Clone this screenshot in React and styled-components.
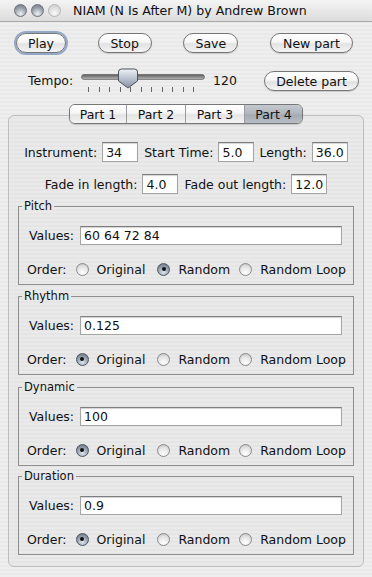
import React from 'react'
import styled, { createGlobalStyle } from 'styled-components'

const GlobalStyle = createGlobalStyle`
  html, body { margin: 0; padding: 0; }
  body {
    font-family: "DejaVu Sans", "Liberation Sans", sans-serif;
    background: #ececec;
    color: #111;
  }
`

const FONT = `"DejaVu Sans", "Liberation Sans", sans-serif`

const Window = styled.div`
  width: 372px;
  height: 577px;
  overflow: hidden;
  display: flex;
  flex-direction: column;
  background: repeating-linear-gradient(0deg, #eeeeee 0 2px, #e9e9e9 2px 4px);
`

const TitleBar = styled.div`
  height: 22px;
  box-sizing: border-box;
  display: flex;
  align-items: center;
  gap: 4px;
  padding-left: 14px;
  background: linear-gradient(#f4f4f4, #dcdcdc);
  border-bottom: 1px solid #a9a9a9;
`

const Light = styled.span`
  width: 13px;
  height: 13px;
  border-radius: 50%;
  box-sizing: border-box;
  border: 1px solid ${p => (p.$dim ? '#b4b4b4' : '#6d727a')};
  background: ${p =>
    p.$dim
      ? 'radial-gradient(circle at 50% 75%, #fafafa, #d6d6d6 70%)'
      : 'radial-gradient(circle at 50% 80%, #eef1f5, #9ca3ad 55%, #6d747e)'};
`

const Title = styled.span`
  margin-left: 8px;
  font: 12.6px ${FONT};
  color: #111;
  white-space: nowrap;
`

const ButtonRow = styled.div`
  display: flex;
  justify-content: space-between;
  padding: 0 19px 0 16px;
  margin-top: 11px;
`

const Button = styled.button`
  height: 20px;
  width: ${p => p.$w}px;
  padding: 0;
  border-radius: 10px;
  border: 1px solid #767676;
  background: linear-gradient(#ffffff 0%, #f6f6f6 45%, #e2e2e2 55%, #f4f4f4 100%);
  font: 12.5px ${FONT};
  color: #111;
  box-shadow: ${p =>
    p.$focus ? '0 0 0 2px rgba(118, 146, 186, 0.75)' : '0 1px 1px rgba(0, 0, 0, 0.15)'};
`

const TempoRow = styled.div`
  display: flex;
  align-items: flex-start;
  margin-top: 18px;
  padding-left: 28px;
  height: 20px;
`

const TempoLabel = styled.span`
  font: 12.5px ${FONT};
  line-height: 20px;
  width: 53px;
`

const SliderSvg = styled.svg`
  margin-top: -4px;
  flex: none;
`

const TempoValue = styled.span`
  font: 12.5px ${FONT};
  line-height: 20px;
  margin-left: 8px;
  width: 51px;
`

const TabBar = styled.div`
  display: flex;
  align-self: center;
  margin-top: 13px;
  margin-bottom: -9px;
  position: relative;
  z-index: 1;
  border: 1px solid #777;
  border-radius: 6px;
  overflow: hidden;
  box-shadow: 0 1px 1px rgba(0, 0, 0, 0.15);
`

const Tab = styled.div`
  width: ${p => p.$w}px;
  height: 18px;
  display: flex;
  align-items: center;
  justify-content: center;
  font: 12.5px ${FONT};
  border-left: ${p => (p.$first ? 'none' : '1px solid #9c9c9c')};
  background: ${p =>
    p.$active
      ? 'linear-gradient(#c4c8cf 0%, #b0b5bd 50%, #a3a9b2 55%, #b9bec6 100%)'
      : 'linear-gradient(#ffffff 0%, #f6f6f6 45%, #e4e4e4 55%, #f4f4f4 100%)'};
`

const Panel = styled.div`
  margin: 0 8px;
  height: 452px;
  box-sizing: border-box;
  border: 1px solid #bebebe;
  border-radius: 6px;
  background: rgba(0, 0, 0, 0.015);
  padding-top: 26px;
  display: flex;
  flex-direction: column;
`

const FieldRow = styled.div`
  display: flex;
  justify-content: center;
  align-items: center;
  gap: 5px;
  margin-top: ${p => p.$top || 0}px;
`

const Label = styled.span`
  font: 12.5px ${FONT};
  white-space: nowrap;
`

const Input = styled.input`
  box-sizing: border-box;
  height: ${p => p.$h || 20}px;
  width: ${p => (p.$w ? `${p.$w}px` : 'auto')};
  flex: ${p => (p.$w ? 'none' : '1')};
  min-width: 0;
  margin: 0 ${p => p.$gap || 0}px 0 0;
  padding: 0 3px;
  border: 1px solid #a4a4a4;
  border-top-color: #7e7e7e;
  background: #fff;
  box-shadow: inset 0 1px 1px rgba(0, 0, 0, 0.18);
  font: 12.5px ${FONT};
  color: #111;
  outline: none;
`

const Group = styled.fieldset`
  margin: ${p => p.$top}px 9px 0;
  padding: 13px 11px 5px 10px;
  border: 1px solid #8e8e8e;
  min-width: 0;
`

const Legend = styled.legend`
  font: 11.5px ${FONT};
  line-height: 13px;
  padding: 0 2px;
  margin-left: -7px;
`

const ValuesRow = styled.div`
  display: flex;
  align-items: center;
  gap: 6px;
`

const OrderRow = styled.div`
  display: flex;
  align-items: center;
  margin-top: 14px;
  margin-left: -2px;
  height: 20px;
  white-space: nowrap;
`

const Option = styled.label`
  display: flex;
  align-items: center;
  gap: 8px;
  margin-left: ${p => p.$ml}px;
  font: 12.5px ${FONT};
  white-space: nowrap;
`

const Radio = styled.span`
  flex: none;
  width: 13px;
  height: 13px;
  border-radius: 50%;
  box-sizing: border-box;
  border: 1px solid ${p => (p.$on ? '#4e5660' : '#8a8a8a')};
  display: flex;
  align-items: center;
  justify-content: center;
  background: ${p =>
    p.$on
      ? 'radial-gradient(circle at 50% 75%, #dfe6ee, #8d99a8 60%, #5f6a78)'
      : 'radial-gradient(circle at 50% 80%, #ffffff, #e2e2e2 60%, #b9b9b9)'};
  &::after {
    content: '';
    display: ${p => (p.$on ? 'block' : 'none')};
    width: 4px;
    height: 4px;
    border-radius: 50%;
    background: #111;
  }
`

function Slider() {
  const ticks = Array.from({ length: 11 }, (_, i) => 7 + i * 10.5)
  return (
    <SliderSvg width="124" height="27" viewBox="0 0 124 27">
      <defs>
        <linearGradient id="track" x1="0" y1="0" x2="0" y2="1">
          <stop offset="0" stopColor="#5a5a5a" />
          <stop offset="0.5" stopColor="#8c8c8c" />
          <stop offset="1" stopColor="#b5b5b5" />
        </linearGradient>
        <linearGradient id="thumb" x1="0" y1="0" x2="0" y2="1">
          <stop offset="0" stopColor="#f0f3f7" />
          <stop offset="0.5" stopColor="#b9c2ce" />
          <stop offset="1" stopColor="#8893a2" />
        </linearGradient>
      </defs>
      <rect x="0.5" y="7.5" width="123" height="5" rx="2.5" fill="url(#track)" stroke="#555" strokeWidth="0.6" />
      {ticks.map(x => (
        <line key={x} x1={Math.round(x) + 0.5} y1="20" x2={Math.round(x) + 0.5} y2="25" stroke="#666" />
      ))}
      <path d="M37.5 5 Q37.5 2 40.5 2 L53.5 2 Q56.5 2 56.5 5 L56.5 14 L47 21 L37.5 14 Z" fill="url(#thumb)" stroke="#4d535b" />
    </SliderSvg>
  )
}

function OrderChoice({ value }) {
  return (
    <OrderRow>
      <Label>Order:</Label>
      <Option $ml={9}>
        <Radio $on={value === 'Original'} />
        Original
      </Option>
      <Option $ml={12}>
        <Radio $on={value === 'Random'} />
        Random
      </Option>
      <Option $ml={9}>
        <Radio $on={value === 'Random Loop'} />
        Random Loop
      </Option>
    </OrderRow>
  )
}

const groups = [
  { name: 'Pitch', values: '60 64 72 84', order: 'Random', top: 6 },
  { name: 'Rhythm', values: '0.125', order: 'Original', top: 5 },
  { name: 'Dynamic', values: '100', order: 'Original', top: 6 },
  { name: 'Duration', values: '0.9', order: 'Original', top: 4 },
]

export default function App() {
  return (
    <Window>
      <GlobalStyle />
      <TitleBar>
        <Light />
        <Light />
        <Light $dim />
        <Title>NIAM (N Is After M) by Andrew Brown</Title>
      </TitleBar>

      <ButtonRow>
        <Button $w={50} $focus>Play</Button>
        <Button $w={54}>Stop</Button>
        <Button $w={55}>Save</Button>
        <Button $w={83}>New part</Button>
      </ButtonRow>

      <TempoRow>
        <TempoLabel>Tempo:</TempoLabel>
        <Slider />
        <TempoValue>120</TempoValue>
        <Button $w={95}>Delete part</Button>
      </TempoRow>

      <TabBar>
        <Tab $w={56} $first>Part 1</Tab>
        <Tab $w={58}>Part 2</Tab>
        <Tab $w={58}>Part 3</Tab>
        <Tab $w={57} $active>Part 4</Tab>
      </TabBar>

      <Panel>
        <FieldRow>
          <Label>Instrument:</Label>
          <Input $w={36} defaultValue="34" $gap={1} />
          <Label>Start Time:</Label>
          <Input $w={36} defaultValue="5.0" />
          <Label>Length:</Label>
          <Input $w={36} defaultValue="36.0" />
        </FieldRow>
        <FieldRow $top={12}>
          <Label>Fade in length:</Label>
          <Input $w={36} defaultValue="4.0" $gap={1} />
          <Label>Fade out length:</Label>
          <Input $w={36} defaultValue="12.0" />
        </FieldRow>

        {groups.map(g => (
          <Group key={g.name} $top={g.top}>
            <Legend>{g.name}</Legend>
            <ValuesRow>
              <Label>Values:</Label>
              <Input $h={19} defaultValue={g.values} />
            </ValuesRow>
            <OrderChoice value={g.order} />
          </Group>
        ))}
      </Panel>
    </Window>
  )
}
